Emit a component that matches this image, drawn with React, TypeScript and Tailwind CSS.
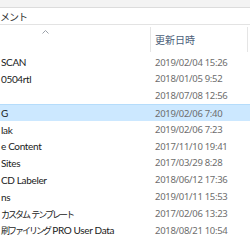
import React from 'react';

type Seg = { t: string; cjk?: boolean };

const ROWS: { name: Seg[]; date: string; selected?: boolean }[] = [
  { name: [{ t: 'SCAN' }], date: '2019/02/04 15:26' },
  { name: [{ t: '0504rtl' }], date: '2018/01/05 9:52' },
  { name: [], date: '2018/07/08 12:56' },
  { name: [{ t: 'G' }], date: '2019/02/06 7:40', selected: true },
  { name: [{ t: 'lak' }], date: '2019/02/06 7:23' },
  { name: [{ t: 'e Content' }], date: '2017/11/10 19:41' },
  { name: [{ t: 'Sites' }], date: '2017/03/29 8:28' },
  { name: [{ t: 'CD Labeler' }], date: '2018/06/12 17:36' },
  { name: [{ t: 'ns' }], date: '2019/01/11 15:53' },
  { name: [{ t: 'カスタム', cjk: true }, { t: ' ' }, { t: 'テンプレート', cjk: true }], date: '2017/02/06 13:23' },
  { name: [{ t: '刷ファイリング', cjk: true }, { t: ' PRO User Data' }], date: '2018/08/21 10:54' },
];

const App: React.FC = () => {
  return (
    <div
      className="w-[250px] h-[250px] overflow-hidden bg-white"
      style={{ fontFamily: '"Noto Sans", "Noto Sans CJK JP", sans-serif' }}
    >
      {/* Top strip */}
      <div className="h-[8px] bg-[#f3f3f3] border-b border-[#dcdcdc]" />

      {/* Address / search bar */}
      <div className="h-[17px] flex items-center pt-[1px] border-b border-[#e3e3e3] text-[10px] text-[#333] leading-none tracking-[-1px]">
        <span>メント</span>
      </div>

      {/* Column header */}
      <div className="relative h-[28px] flex">
        <div className="w-[150px] relative">
          <svg className="absolute left-[42px] top-[5px]" width="7" height="4" viewBox="0 0 7 4">
            <path d="M0.5 3.5 L3.5 0.5 L6.5 3.5" fill="none" stroke="#9aa0a8" strokeWidth="1" />
          </svg>
        </div>
        <div className="w-[1px] mt-[2px] h-[25px] bg-[#e5e5e5]" />
        <div className="w-[96px] flex items-center pl-[4px] pt-[3px] text-[10px] text-[#4c607a]">更新日時</div>
        <div className="w-[1px] mt-[2px] h-[25px] bg-[#e5e5e5]" />
      </div>

      {/* Rows */}
      <div className="flex flex-col pt-[1px]">
        {ROWS.map((r, i) => (
          <div
            key={i}
            className={`h-[16.8px] flex items-center leading-none whitespace-nowrap ${
              r.selected ? 'bg-[#cce8ff] border-t border-[#b5dcfb]' : ''
            }`}
          >
            <div
              className="w-[155px] pl-[1px] text-[10px] text-[#1a1a1a] tracking-[-0.35px]"
              style={{ fontFamily: 'Lato, "Noto Sans CJK JP", sans-serif' }}
            >
              {r.name.map((s, j) =>
                s.cjk ? (
                  <span key={j} className="text-[9px] tracking-[-2px]">{s.t}</span>
                ) : (
                  <span key={j}>{s.t}</span>
                )
              )}
            </div>
            <div className="text-[9.5px] text-[#6d6d6d] tracking-[-0.3px]">{r.date}</div>
          </div>
        ))}
      </div>
    </div>
  );
};

export default App;
